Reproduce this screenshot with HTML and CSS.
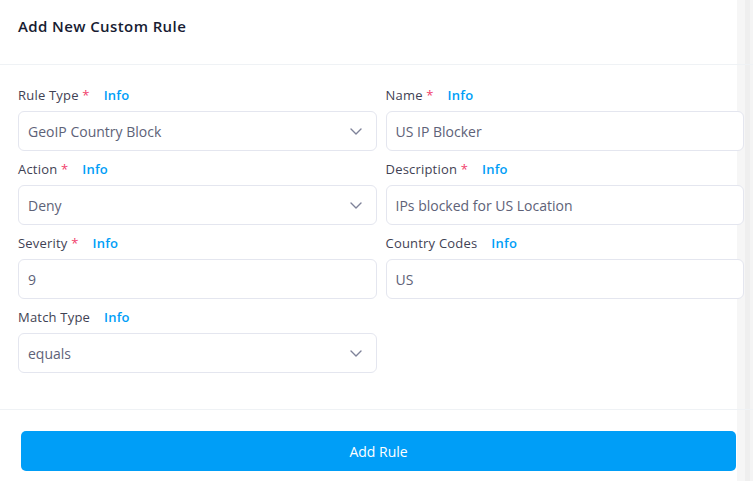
FILE: index.html
```html
<!DOCTYPE html>
<html lang="en">
<head>
<meta charset="utf-8">
<title>Add New Custom Rule</title>
<link rel="stylesheet" href="styles.css">
</head>
<body>
<div class="edge"></div>
<div class="card">
  <div class="card-header">
    <h3 class="card-title">Add New Custom Rule</h3>
  </div>
  <div class="card-body">
    <div class="grid">
      <div class="field">
        <div class="label">Rule Type <span class="req">*</span><a class="info">Info</a></div>
        <div class="control select"><span>GeoIP Country Block</span><svg class="chev" width="12" height="7" viewBox="0 0 12 7"><path d="M1 1l5 5 5-5" fill="none" stroke="#7e8299" stroke-width="1.4" stroke-linecap="round" stroke-linejoin="round"/></svg></div>
      </div>
      <div class="field">
        <div class="label">Name <span class="req">*</span><a class="info">Info</a></div>
        <div class="control"><span>US IP Blocker</span></div>
      </div>
      <div class="field">
        <div class="label">Action <span class="req">*</span><a class="info">Info</a></div>
        <div class="control select"><span>Deny</span><svg class="chev" width="12" height="7" viewBox="0 0 12 7"><path d="M1 1l5 5 5-5" fill="none" stroke="#7e8299" stroke-width="1.4" stroke-linecap="round" stroke-linejoin="round"/></svg></div>
      </div>
      <div class="field">
        <div class="label">Description <span class="req">*</span><a class="info">Info</a></div>
        <div class="control"><span>IPs blocked for US Location</span></div>
      </div>
      <div class="field">
        <div class="label">Severity <span class="req">*</span><a class="info">Info</a></div>
        <div class="control"><span>9</span></div>
      </div>
      <div class="field">
        <div class="label">Country Codes<a class="info">Info</a></div>
        <div class="control"><span>US</span></div>
      </div>
      <div class="field">
        <div class="label">Match Type<a class="info">Info</a></div>
        <div class="control select"><span>equals</span><svg class="chev" width="12" height="7" viewBox="0 0 12 7"><path d="M1 1l5 5 5-5" fill="none" stroke="#7e8299" stroke-width="1.4" stroke-linecap="round" stroke-linejoin="round"/></svg></div>
      </div>
    </div>
  </div>
  <div class="card-footer">
    <button class="btn">Add Rule</button>
  </div>
</div>
</body>
</html>
```
FILE: styles.css
```css
* { box-sizing: border-box; }
html, body { margin: 0; padding: 0; background: #fff; }
body {
  font-family: "Open Sans", "Noto Sans", sans-serif;
  color: #3f4254;
  position: relative;
  min-height: 481px;
  overflow: hidden;
}
.edge {
  position: absolute;
  top: 0;
  right: 0;
  width: 16px;
  height: 100%;
  background: linear-gradient(to right, #f6f6f6 0, #f6f6f6 8px, #efefef 8px, #efefef 13px, #f4f4f4 13px);
  z-index: 0;
}
.card { position: relative; z-index: 1; }
.card-header {
  height: 65px;
  padding: 15px 18px 0;
  border-bottom: 1px solid #eff2f5;
}
.card-title {
  margin: 0;
  font-size: 15px;
  font-weight: 600;
  line-height: 22px;
  letter-spacing: 0.4px;
  color: #181c32;
}
.card-body { padding: 21px 9px 36px 18px; }
.grid {
  display: grid;
  grid-template-columns: 1fr 1fr;
  column-gap: 9px;
  row-gap: 9px;
}
.label {
  font-size: 13px;
  line-height: 19px;
  height: 20px;
  margin-bottom: 5px;
  letter-spacing: 0.2px;
  color: #3f4254;
  white-space: nowrap;
}
.req { color: #f1416c; }
.info {
  color: #009ef7;
  font-weight: 600;
  margin-left: 14px;
}
.control {
  height: 40px;
  border: 1px solid #e4e6ef;
  border-radius: 6px;
  background: #fff;
  padding: 0 14px 0 9px;
  display: flex;
  align-items: center;
  justify-content: space-between;
  font-size: 14px;
  color: #5e6278;
}
.chev { flex: none; }
.card-footer {
  border-top: 1px solid #eff2f5;
  padding: 21px 18px 10px 21px;
}
.btn {
  display: block;
  width: 715px;
  height: 40px;
  border: 0;
  border-radius: 5px;
  background: #009ef7;
  color: #fff;
  font-family: inherit;
  font-size: 14px;
  font-weight: 500;
}
```
